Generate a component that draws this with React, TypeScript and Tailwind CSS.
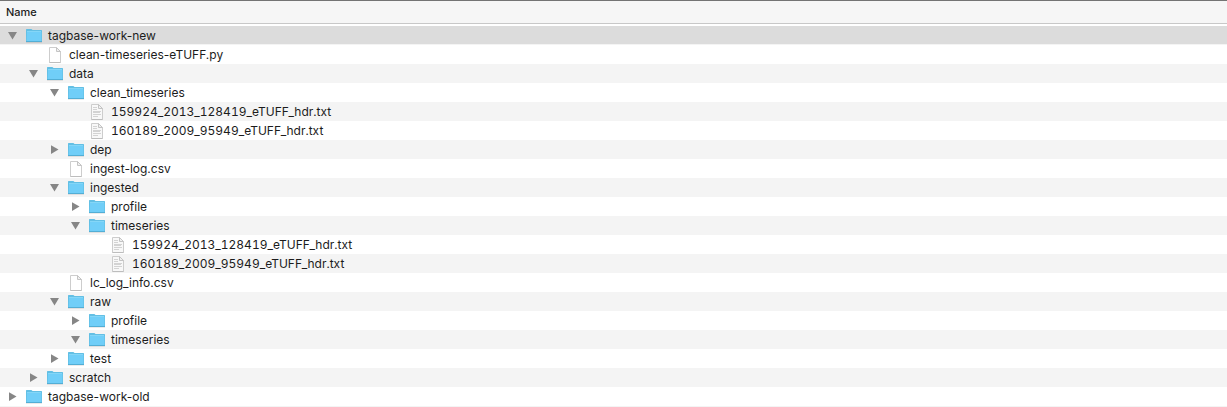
import { useState } from "react";

type Kind = "folder" | "blank" | "text";

interface Entry {
  name: string;
  kind: Kind;
  open?: boolean;
  children?: Entry[];
}

const entries: Entry[] = [
  {
    name: "tagbase-work-new",
    kind: "folder",
    open: true,
    children: [
      { name: "clean-timeseries-eTUFF.py", kind: "blank" },
      {
        name: "data",
        kind: "folder",
        open: true,
        children: [
          {
            name: "clean_timeseries",
            kind: "folder",
            open: true,
            children: [
              { name: "159924_2013_128419_eTUFF_hdr.txt", kind: "text" },
              { name: "160189_2009_95949_eTUFF_hdr.txt", kind: "text" },
            ],
          },
          { name: "dep", kind: "folder" },
          { name: "ingest-log.csv", kind: "blank" },
          {
            name: "ingested",
            kind: "folder",
            open: true,
            children: [
              { name: "profile", kind: "folder" },
              {
                name: "timeseries",
                kind: "folder",
                open: true,
                children: [
                  { name: "159924_2013_128419_eTUFF_hdr.txt", kind: "text" },
                  { name: "160189_2009_95949_eTUFF_hdr.txt", kind: "text" },
                ],
              },
            ],
          },
          { name: "lc_log_info.csv", kind: "blank" },
          {
            name: "raw",
            kind: "folder",
            open: true,
            children: [
              { name: "profile", kind: "folder" },
              { name: "timeseries", kind: "folder", open: true },
            ],
          },
          { name: "test", kind: "folder" },
        ],
      },
      { name: "scratch", kind: "folder" },
    ],
  },
  { name: "tagbase-work-old", kind: "folder" },
];

const indents = ["pl-[7px]", "pl-[28px]", "pl-[49px]", "pl-[70px]", "pl-[91px]"];

interface Row {
  entry: Entry;
  depth: number;
  path: string;
}

function flatten(list: Entry[], closed: Record<string, boolean>, depth = 0, parent = ""): Row[] {
  return list.flatMap((entry) => {
    const path = parent + "/" + entry.name;
    const open = closed[path] === undefined ? entry.open : !closed[path];
    const below = open && entry.children ? flatten(entry.children, closed, depth + 1, path) : [];
    return [{ entry, depth, path }, ...below];
  });
}

function FolderIcon() {
  return (
    <svg className="size-4 shrink-0" viewBox="0 0 16 16" aria-hidden="true">
      <path d="M0 3V1.6Q0 1 .6 1H5.4L6.6 2H15.4Q16 2 16 2.6V14H0Z" fill="#63bfe4" />
      <path d="M1 3H15V4H1Z" fill="#84d6f7" />
      <path d="M1 4H15.4V13.2H.6Z" fill="#70cef8" />
      <path d="M0 13.2H16V14H0Z" fill="#4fa9d0" />
      <path d="M0 14H16V15H0Z" fill="#000000" fillOpacity=".08" />
    </svg>
  );
}

function FileIcon({ lines }: { lines: boolean }) {
  return (
    <svg className="size-4 shrink-0" viewBox="0 0 16 16" aria-hidden="true">
      <path
        d="M2.5 .5H9.5L13.5 4.5V15.5H2.5Z"
        fill={lines ? "#f8f8f8" : "#ffffff"}
        stroke="#cdcdcd"
        strokeLinejoin="round"
      />
      <path d="M9.5 .5V4.5H13.5Z" fill="#f0f0f0" stroke="#c4c4c4" strokeLinejoin="round" />
      <path d="M2.5 15.5H13.5" stroke="#bdbdbd" />
      {lines && (
        <path
          d="M4 3.5H8M4 5.5H8M4 7.5H12M4 8.5H11M4 10.5H12M4 12.5H9"
          stroke="#d3d3d3"
          fill="none"
        />
      )}
    </svg>
  );
}

function Triangle({ open }: { open: boolean }) {
  return (
    <svg className="block size-[11px]" viewBox="0 0 11 11" aria-hidden="true">
      <path d={open ? "M1 2H10L5.5 9.5Z" : "M2 1.2L9.5 5.6L2 10Z"} fill="#868686" />
    </svg>
  );
}

export default function App() {
  const [closed, setClosed] = useState<Record<string, boolean>>({});
  const [selected, setSelected] = useState("/tagbase-work-new");
  const rows = flatten(entries, closed);

  return (
    <main className="min-h-screen border-t border-[#747474] bg-white font-['Inter',sans-serif] text-[#1c1c1c]">
      <table className="w-full border-separate border-spacing-0">
        <thead>
          <tr>
            <th
              scope="col"
              className="h-[23px] border-b border-[#c8c8c8] bg-[#f6f6f6] p-0 pl-[6px] text-left align-middle text-[11px] leading-4 font-medium"
            >
              Name
            </th>
          </tr>
        </thead>
        <tbody className="before:block before:h-0.5">
          {rows.map(({ entry, depth, path }) => {
            const open = closed[path] === undefined ? !!entry.open : !closed[path];
            return (
              <tr
                key={path}
                onClick={() => setSelected(path)}
                aria-selected={path === selected}
                className={
                  path === selected
                    ? "bg-[#dcdcdc] shadow-[inset_0_-1px_#f4f4f4]"
                    : "odd:bg-[#f4f4f4] even:bg-white"
                }
              >
                <td className="p-0">
                  <div className={`flex h-[19px] items-center ${indents[depth]}`}>
                    {entry.kind === "folder" ? (
                      <button
                        type="button"
                        aria-expanded={open}
                        aria-label={entry.name}
                        className="mr-2 w-[11px] shrink-0"
                        onClick={() => setClosed({ ...closed, [path]: open })}
                      >
                        <Triangle open={open} />
                      </button>
                    ) : (
                      <span className="mr-2 w-[11px] shrink-0" />
                    )}
                    {entry.kind === "folder" ? (
                      <FolderIcon />
                    ) : (
                      <FileIcon lines={entry.kind === "text"} />
                    )}
                    <span
                      className={`ml-1.5 text-[12px] leading-4 whitespace-nowrap ${
                        entry.kind === "text" ? "tabular-nums" : ""
                      }`}
                    >
                      {entry.name}
                    </span>
                  </div>
                </td>
              </tr>
            );
          })}
        </tbody>
        <tfoot>
          <tr>
            <td className="h-px bg-[#f4f4f4] p-0" />
          </tr>
        </tfoot>
      </table>
    </main>
  );
}
